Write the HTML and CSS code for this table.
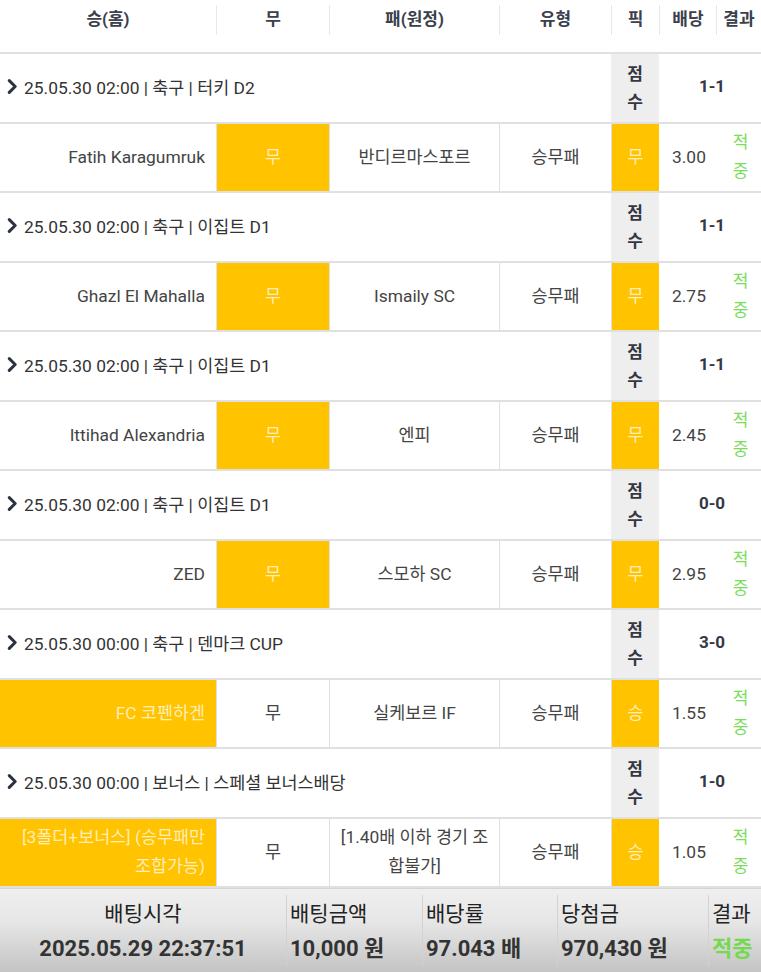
FILE: index.html
```html
<!DOCTYPE html>
<html lang="ko">
<head>
<meta charset="utf-8">
<link rel="stylesheet" href="styles.css">
</head>
<body>
<div class="bets">
  <div class="thead">
    <div class="th">승(홈)</div>
    <div class="th">무</div>
    <div class="th">패(원정)</div>
    <div class="th">유형</div>
    <div class="th">픽</div>
    <div class="th">배당</div>
    <div class="th">결과</div>
  </div>

  <div class="row info">
    <div class="title"><svg class="chev" viewBox="0 0 10 14" width="11" height="15"><path d="M2 1.5 L7.5 7 L2 12.5" fill="none" stroke="#2c3240" stroke-width="2.8" stroke-linecap="round" stroke-linejoin="round"/></svg>25.05.30 02:00 | 축구 | 터키 D2</div>
    <div class="slabel">점<br>수</div>
    <div class="score">1-1</div>
  </div>
  <div class="row match">
    <div class="c home">Fatih Karagumruk</div>
    <div class="c mid sel">무</div>
    <div class="c mid">반디르마스포르</div>
    <div class="c mid">승무패</div>
    <div class="c mid pick sel">무</div>
    <div class="c odds">3.00</div>
    <div class="c res">적<br>중</div>
  </div>

  <div class="row info">
    <div class="title"><svg class="chev" viewBox="0 0 10 14" width="11" height="15"><path d="M2 1.5 L7.5 7 L2 12.5" fill="none" stroke="#2c3240" stroke-width="2.8" stroke-linecap="round" stroke-linejoin="round"/></svg>25.05.30 02:00 | 축구 | 이집트 D1</div>
    <div class="slabel">점<br>수</div>
    <div class="score">1-1</div>
  </div>
  <div class="row match">
    <div class="c home">Ghazl El Mahalla</div>
    <div class="c mid sel">무</div>
    <div class="c mid">Ismaily SC</div>
    <div class="c mid">승무패</div>
    <div class="c mid pick sel">무</div>
    <div class="c odds">2.75</div>
    <div class="c res">적<br>중</div>
  </div>

  <div class="row info">
    <div class="title"><svg class="chev" viewBox="0 0 10 14" width="11" height="15"><path d="M2 1.5 L7.5 7 L2 12.5" fill="none" stroke="#2c3240" stroke-width="2.8" stroke-linecap="round" stroke-linejoin="round"/></svg>25.05.30 02:00 | 축구 | 이집트 D1</div>
    <div class="slabel">점<br>수</div>
    <div class="score">1-1</div>
  </div>
  <div class="row match">
    <div class="c home">Ittihad Alexandria</div>
    <div class="c mid sel">무</div>
    <div class="c mid">엔피</div>
    <div class="c mid">승무패</div>
    <div class="c mid pick sel">무</div>
    <div class="c odds">2.45</div>
    <div class="c res">적<br>중</div>
  </div>

  <div class="row info">
    <div class="title"><svg class="chev" viewBox="0 0 10 14" width="11" height="15"><path d="M2 1.5 L7.5 7 L2 12.5" fill="none" stroke="#2c3240" stroke-width="2.8" stroke-linecap="round" stroke-linejoin="round"/></svg>25.05.30 02:00 | 축구 | 이집트 D1</div>
    <div class="slabel">점<br>수</div>
    <div class="score">0-0</div>
  </div>
  <div class="row match">
    <div class="c home">ZED</div>
    <div class="c mid sel">무</div>
    <div class="c mid">스모하 SC</div>
    <div class="c mid">승무패</div>
    <div class="c mid pick sel">무</div>
    <div class="c odds">2.95</div>
    <div class="c res">적<br>중</div>
  </div>

  <div class="row info">
    <div class="title"><svg class="chev" viewBox="0 0 10 14" width="11" height="15"><path d="M2 1.5 L7.5 7 L2 12.5" fill="none" stroke="#2c3240" stroke-width="2.8" stroke-linecap="round" stroke-linejoin="round"/></svg>25.05.30 00:00 | 축구 | 덴마크 CUP</div>
    <div class="slabel">점<br>수</div>
    <div class="score">3-0</div>
  </div>
  <div class="row match">
    <div class="c home sel">FC 코펜하겐</div>
    <div class="c mid">무</div>
    <div class="c mid">실케보르 IF</div>
    <div class="c mid">승무패</div>
    <div class="c mid pick sel">승</div>
    <div class="c odds">1.55</div>
    <div class="c res">적<br>중</div>
  </div>

  <div class="row info">
    <div class="title"><svg class="chev" viewBox="0 0 10 14" width="11" height="15"><path d="M2 1.5 L7.5 7 L2 12.5" fill="none" stroke="#2c3240" stroke-width="2.8" stroke-linecap="round" stroke-linejoin="round"/></svg>25.05.30 00:00 | 보너스 | 스페셜 보너스배당</div>
    <div class="slabel">점<br>수</div>
    <div class="score">1-0</div>
  </div>
  <div class="row match">
    <div class="c home sel">[3폴더+보너스] (승무패만<br>조합가능)</div>
    <div class="c mid">무</div>
    <div class="c mid">[1.40배 이하 경기 조<br>합불가]</div>
    <div class="c mid">승무패</div>
    <div class="c mid pick sel">승</div>
    <div class="c odds">1.05</div>
    <div class="c res">적<br>중</div>
  </div>
</div>

<div class="summary">
  <div class="sc first">
    <div class="lbl">배팅시각</div>
    <div class="val">2025.05.29 22:37:51</div>
  </div>
  <div class="sc">
    <div class="lbl">배팅금액</div>
    <div class="val">10,000 원</div>
  </div>
  <div class="sc">
    <div class="lbl">배당률</div>
    <div class="val">97.043 배</div>
  </div>
  <div class="sc">
    <div class="lbl">당첨금</div>
    <div class="val">970,430 원</div>
  </div>
  <div class="sc">
    <div class="lbl">결과</div>
    <div class="val win">적중</div>
  </div>
</div>
</body>
</html>
```
FILE: styles.css
```css
* { box-sizing: border-box; }
html, body {
  margin: 0;
  padding: 0;
  background: #ffffff;
}
body {
  width: 761px;
  height: 972px;
  overflow: hidden;
  font-family: Roboto, "Noto Sans CJK KR", "Noto Sans", sans-serif;
  color: #444;
}

.thead, .row {
  display: grid;
  grid-template-columns: 216px 113px 170px 112px 48px 57px 45px;
}

.thead {
  height: 54px;
  padding-top: 5px;
  border-bottom: 2px solid #e0e0e0;
  align-items: start;
}
.th {
  height: 30px;
  line-height: 28px;
  text-align: center;
  font-size: 17px;
  font-weight: 700;
  color: #3b404d;
}
.th + .th { border-left: 1px solid #e8e8e8; }

.row {
  height: 69.5px;
  border-bottom: 2px solid #e0e0e0;
}

.info .title {
  grid-column: 1 / 5;
  display: flex;
  align-items: center;
  padding-left: 7px;
  padding-bottom: 3px;
  font-size: 17.4px;
  color: #333;
}
.chev { margin-right: 6px; flex: none; }
.slabel {
  background: #eeeeee;
  display: flex;
  align-items: center;
  justify-content: center;
  text-align: center;
  font-size: 17px;
  font-weight: 700;
  line-height: 28px;
  color: #333844;
}
.score {
  grid-column: 6 / 8;
  display: flex;
  align-items: center;
  justify-content: center;
  padding-bottom: 3px;
  font-size: 17px;
  font-weight: 700;
  color: #333844;
  padding-left: 4px;
}

.c {
  display: flex;
  align-items: center;
  font-size: 17.4px;
  line-height: 29px;
  color: #444;
}
.home {
  justify-content: flex-end;
  text-align: right;
  padding: 0 11px 0 6px;
}
.mid {
  justify-content: center;
  text-align: center;
  border-left: 1px solid #e0e0e0;
}
.pick { border-left: 1px solid #e0e0e0; }
.sel {
  background: #ffc300;
  color: rgba(255, 255, 255, 0.72);
}
.odds { padding-left: 13px; }
.res {
  justify-content: center;
  text-align: center;
  color: #79dc5a;
  padding-left: 4px;
  font-size: 17px;
}

.summary {
  display: grid;
  grid-template-columns: 286px 136px 135px 151px 53px;
  height: 84px;
  border-top: 1px solid #d4d4d4;
  background: linear-gradient(#efefef 0%, #e6e6e6 40%, #c4c4c4 100%);
  padding: 6px 0;
}
.sc {
  padding-left: 3px;
  padding-top: 2px;
  border-left: 1px solid #d2d2d2;
}
.sc.first {
  border-left: none;
  text-align: center;
  padding-left: 0;
}
.lbl {
  font-size: 21px;
  line-height: 34px;
  color: #222;
}
.val {
  font-size: 22px;
  line-height: 35px;
  font-weight: 700;
  color: #333;
}
.val.win { color: #74d94f; }
```
